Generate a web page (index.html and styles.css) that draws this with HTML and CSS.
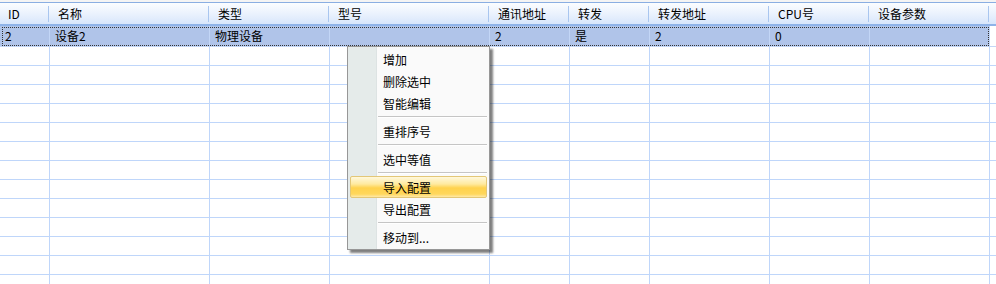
FILE: index.html
```html
<!DOCTYPE html>
<html lang="zh-CN">
<head>
    <meta charset="UTF-8">
    <title>设备列表</title>
    <link rel="stylesheet" href="styles.css">
</head>
<body>
    <div class="grid-wrap">
        <table class="grid">
            <colgroup>
                <col class="c-id">
                <col class="c-name">
                <col class="c-type">
                <col class="c-model">
                <col class="c-addr">
                <col class="c-fwd">
                <col class="c-fwdaddr">
                <col class="c-cpu">
                <col class="c-param">
                <col class="c-rest">
            </colgroup>
            <thead>
                <tr>
                    <th>ID</th>
                    <th>名称</th>
                    <th>类型</th>
                    <th>型号</th>
                    <th>通讯地址</th>
                    <th>转发</th>
                    <th>转发地址</th>
                    <th>CPU号</th>
                    <th>设备参数</th>
                    <th class="last"></th>
                </tr>
            </thead>
            <tbody>
                <tr class="selected">
                    <td>2</td>
                    <td>设备2</td>
                    <td>物理设备</td>
                    <td></td>
                    <td>2</td>
                    <td>是</td>
                    <td>2</td>
                    <td>0</td>
                    <td></td>
                    <td class="last"></td>
                </tr>
                <tr><td></td><td></td><td></td><td></td><td></td><td></td><td></td><td></td><td></td><td class="last"></td></tr>
                <tr><td></td><td></td><td></td><td></td><td></td><td></td><td></td><td></td><td></td><td class="last"></td></tr>
                <tr><td></td><td></td><td></td><td></td><td></td><td></td><td></td><td></td><td></td><td class="last"></td></tr>
                <tr><td></td><td></td><td></td><td></td><td></td><td></td><td></td><td></td><td></td><td class="last"></td></tr>
                <tr><td></td><td></td><td></td><td></td><td></td><td></td><td></td><td></td><td></td><td class="last"></td></tr>
                <tr><td></td><td></td><td></td><td></td><td></td><td></td><td></td><td></td><td></td><td class="last"></td></tr>
                <tr><td></td><td></td><td></td><td></td><td></td><td></td><td></td><td></td><td></td><td class="last"></td></tr>
                <tr><td></td><td></td><td></td><td></td><td></td><td></td><td></td><td></td><td></td><td class="last"></td></tr>
                <tr><td></td><td></td><td></td><td></td><td></td><td></td><td></td><td></td><td></td><td class="last"></td></tr>
                <tr><td></td><td></td><td></td><td></td><td></td><td></td><td></td><td></td><td></td><td class="last"></td></tr>
                <tr><td></td><td></td><td></td><td></td><td></td><td></td><td></td><td></td><td></td><td class="last"></td></tr>
                <tr><td></td><td></td><td></td><td></td><td></td><td></td><td></td><td></td><td></td><td class="last"></td></tr>
                <tr><td></td><td></td><td></td><td></td><td></td><td></td><td></td><td></td><td></td><td class="last"></td></tr>
            </tbody>
        </table>

        <!-- 选中行的虚线焦点框 -->
        <div class="focus-rect"></div>

        <!-- 右键菜单 -->
        <div class="context-menu">
            <div class="menu-item">增加</div>
            <div class="menu-item">删除选中</div>
            <div class="menu-item">智能编辑</div>
            <div class="menu-sep"></div>
            <div class="menu-item">重排序号</div>
            <div class="menu-sep"></div>
            <div class="menu-item">选中等值</div>
            <div class="menu-sep"></div>
            <div class="menu-item active">导入配置</div>
            <div class="menu-item">导出配置</div>
            <div class="menu-sep"></div>
            <div class="menu-item">移动到...</div>
        </div>
    </div>
</body>
</html>
```

FILE: styles.css
```css
html, body {
    margin: 0;
    padding: 0;
    background-color: #fff;
}
body {
    font-family: "Noto Sans CJK SC", "Liberation Sans", sans-serif;
    font-size: 12px;
    color: #000;
    width: 996px;
    height: 284px;
    overflow: hidden;
}
.grid-wrap {
    position: relative;
    padding-top: 2px;
    background-color: #f4f4f4;
}
.grid {
    width: 996px;
    table-layout: fixed;
    border-collapse: separate;
    border-spacing: 0;
    background-color: #fff;
}
.c-id { width: 50px; }
.c-name { width: 160px; }
.c-type { width: 120px; }
.c-model { width: 160px; }
.c-addr { width: 80px; }
.c-fwd { width: 80px; }
.c-fwdaddr { width: 120px; }
.c-cpu { width: 100px; }
.c-param { width: 120px; }
.c-rest { width: 6px; }

.grid th {
    height: 21px;
    padding: 0 0 0 8px;
    text-align: left;
    font-weight: normal;
    white-space: nowrap;
    border-top: 1px solid #8aaee2;
    border-bottom: 2px solid #8fb3e8;
    background: linear-gradient(#fbfdff, #e9f1fd 55%, #d8e6fb);
    background-clip: padding-box;
    position: relative;
    line-height: 21px;
}
.grid th::after {
    content: "";
    position: absolute;
    right: 1px;
    top: 3px;
    bottom: 2px;
    width: 1px;
    background-color: #a9c6ef;
}
.grid th.last::after {
    display: none;
}
.grid td {
    height: 18px;
    padding: 0 0 0 5px;
    line-height: 18px;
    white-space: nowrap;
    overflow: hidden;
    border-right: 1px solid #bfd6fa;
    border-bottom: 1px solid #bfd6fa;
}
.grid td.last {
    border-right: none;
}
.grid tr.selected td {
    height: 19px;
    line-height: 20px;
    background-color: #b0c4e9;
    border-right-color: #c3d6f6;
    border-bottom-color: #c3d6f6;
}
.grid tr.selected td.last {
    background-color: #fff;
}

.focus-rect {
    position: absolute;
    left: 2px;
    top: 27px;
    width: 985px;
    height: 17px;
    border: 1px dotted #333;
}

.context-menu {
    position: absolute;
    left: 347px;
    top: 46px;
    width: 141px;
    padding: 1px 0 1px;
    background: linear-gradient(to right, #e5ebea 0, #e5ebea 28px, #dde3e3 28px, #dde3e3 29px, #fafafa 29px);
    border: 1px solid #979797;
    box-shadow: 3px 3px 2px rgba(0, 0, 0, 0.5);
}
.menu-item {
    height: 22px;
    line-height: 22px;
    padding-left: 32px;
    margin: 0 2px;
    border: 1px solid transparent;
    box-sizing: border-box;
    border-radius: 2px;
}
.menu-item.active {
    border-color: #e3c777;
    background: linear-gradient(#fff8dc, #ffeaa0 35%, #ffd24d 55%, #ffd75c 85%, #ffe9a8);
}
.menu-sep {
    height: 6px;
    margin-left: 30px;
    margin-right: 2px;
    position: relative;
}
.menu-sep::before {
    content: "";
    position: absolute;
    left: 0;
    right: 0;
    top: 2px;
    border-top: 1px solid #c5c5c5;
    border-bottom: 1px solid #fff;
}
```
